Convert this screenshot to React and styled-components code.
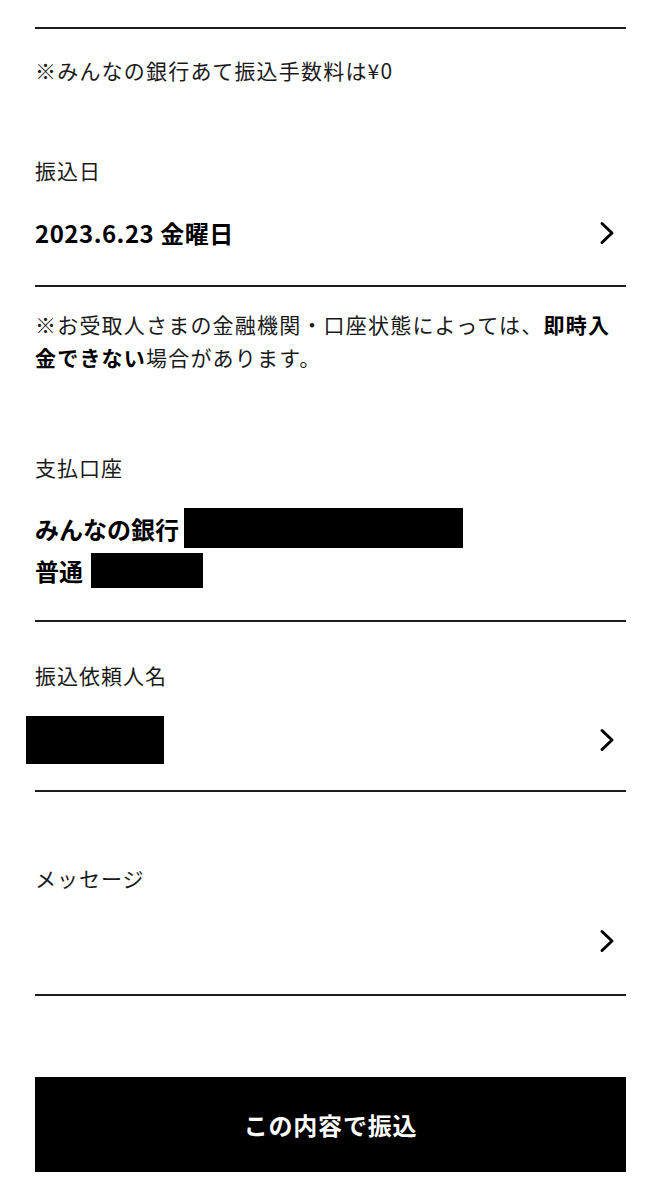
import React from "react";
import styled, { createGlobalStyle } from "styled-components";

const GlobalStyle = createGlobalStyle`
  html, body {
    margin: 0;
    padding: 0;
    background: #fff;
  }
  body {
    font-family: "Noto Sans CJK JP", "Noto Sans", sans-serif;
    color: #111;
  }
`;

const Page = styled.div`
  width: 668px;
  box-sizing: border-box;
  padding: 27px 42px 0 35px;
  display: flex;
  flex-direction: column;
`;

const Divider = styled.hr`
  margin: 0;
  border: none;
  height: 2px;
  background: #1c1c1c;
`;

const Section = styled.section`
  display: flex;
  flex-direction: column;
  padding-top: ${(p) => p.$top || 0}px;
  padding-bottom: ${(p) => p.$bottom || 0}px;
`;

const Note = styled.p`
  margin: 0;
  font-size: 21px;
  line-height: 33px;
  letter-spacing: 1.2px;
  color: #1a1a1a;

  strong {
    font-weight: 700;
    color: #000;
  }
`;

const Label = styled.div`
  font-size: 21px;
  line-height: 33px;
  letter-spacing: 1px;
  color: #1a1a1a;
  margin-bottom: ${(p) => p.$gap || 0}px;
`;

const ValueRow = styled.div`
  display: flex;
  align-items: center;
  justify-content: space-between;
  min-height: ${(p) => p.$height || 36}px;
`;

const Value = styled.div`
  font-size: 24px;
  font-weight: 700;
  line-height: 36px;
  letter-spacing: 0.5px;
  color: #000;
`;

const AccountLines = styled.div`
  display: flex;
  flex-direction: column;
`;

const AccountLine = styled.div`
  display: flex;
  align-items: center;
  gap: ${(p) => p.$gap}px;
  height: 42px;
  font-size: 24px;
  font-weight: 700;
  color: #000;
`;

const Redacted = styled.span`
  display: block;
  width: ${(p) => p.$w}px;
  height: ${(p) => p.$h}px;
  background: #000;
  margin-left: ${(p) => p.$shift || 0}px;
`;

const ChevronWrap = styled.span`
  display: flex;
  width: 16px;
  margin-right: 11px;
`;

const Chevron = () => (
  <ChevronWrap>
    <svg width="16" height="24" viewBox="0 0 16 24" fill="none">
      <path
        d="M3 2.5 L13 12 L3 21.5"
        stroke="#000"
        strokeWidth="3"
        strokeLinecap="round"
        strokeLinejoin="round"
      />
    </svg>
  </ChevronWrap>
);

const SubmitButton = styled.button`
  margin-top: 81px;
  height: 95px;
  width: 100%;
  border: none;
  background: #000;
  color: #fff;
  font-family: "Noto Sans CJK JP", "Noto Sans", sans-serif;
  font-size: 24px;
  font-weight: 700;
  letter-spacing: 0.8px;
  cursor: pointer;
`;

export default function App() {
  return (
    <>
      <GlobalStyle />
      <Page>
        <Divider />
        <Section $top={25}>
          <Note>※みんなの銀行あて振込手数料は¥0</Note>
        </Section>

        <Section $top={67} $bottom={34}>
          <Label $gap={28}>振込日</Label>
          <ValueRow>
            <Value>2023.6.23 金曜日</Value>
            <Chevron />
          </ValueRow>
        </Section>
        <Divider />

        <Section $top={21}>
          <Note>
            ※お受取人さまの金融機関・口座状態によっては、<strong>即時入金できない</strong>場合があります。
          </Note>
        </Section>

        <Section $top={77} $bottom={29}>
          <Label $gap={23}>支払口座</Label>
          <AccountLines>
            <AccountLine $gap={5}>
              みんなの銀行
              <Redacted $w={279} $h={40} />
            </AccountLine>
            <AccountLine $gap={8}>
              普通
              <Redacted $w={112} $h={35} />
            </AccountLine>
          </AccountLines>
        </Section>
        <Divider />

        <Section $top={37} $bottom={26}>
          <Label $gap={24}>振込依頼人名</Label>
          <ValueRow $height={48}>
            <Redacted $w={138} $h={48} $shift={-9} />
            <Chevron />
          </ValueRow>
        </Section>
        <Divider />

        <Section $top={70} $bottom={35}>
          <Label $gap={28}>メッセージ</Label>
          <ValueRow>
            <span />
            <Chevron />
          </ValueRow>
        </Section>
        <Divider />

        <SubmitButton type="button">この内容で振込</SubmitButton>
      </Page>
    </>
  );
}
